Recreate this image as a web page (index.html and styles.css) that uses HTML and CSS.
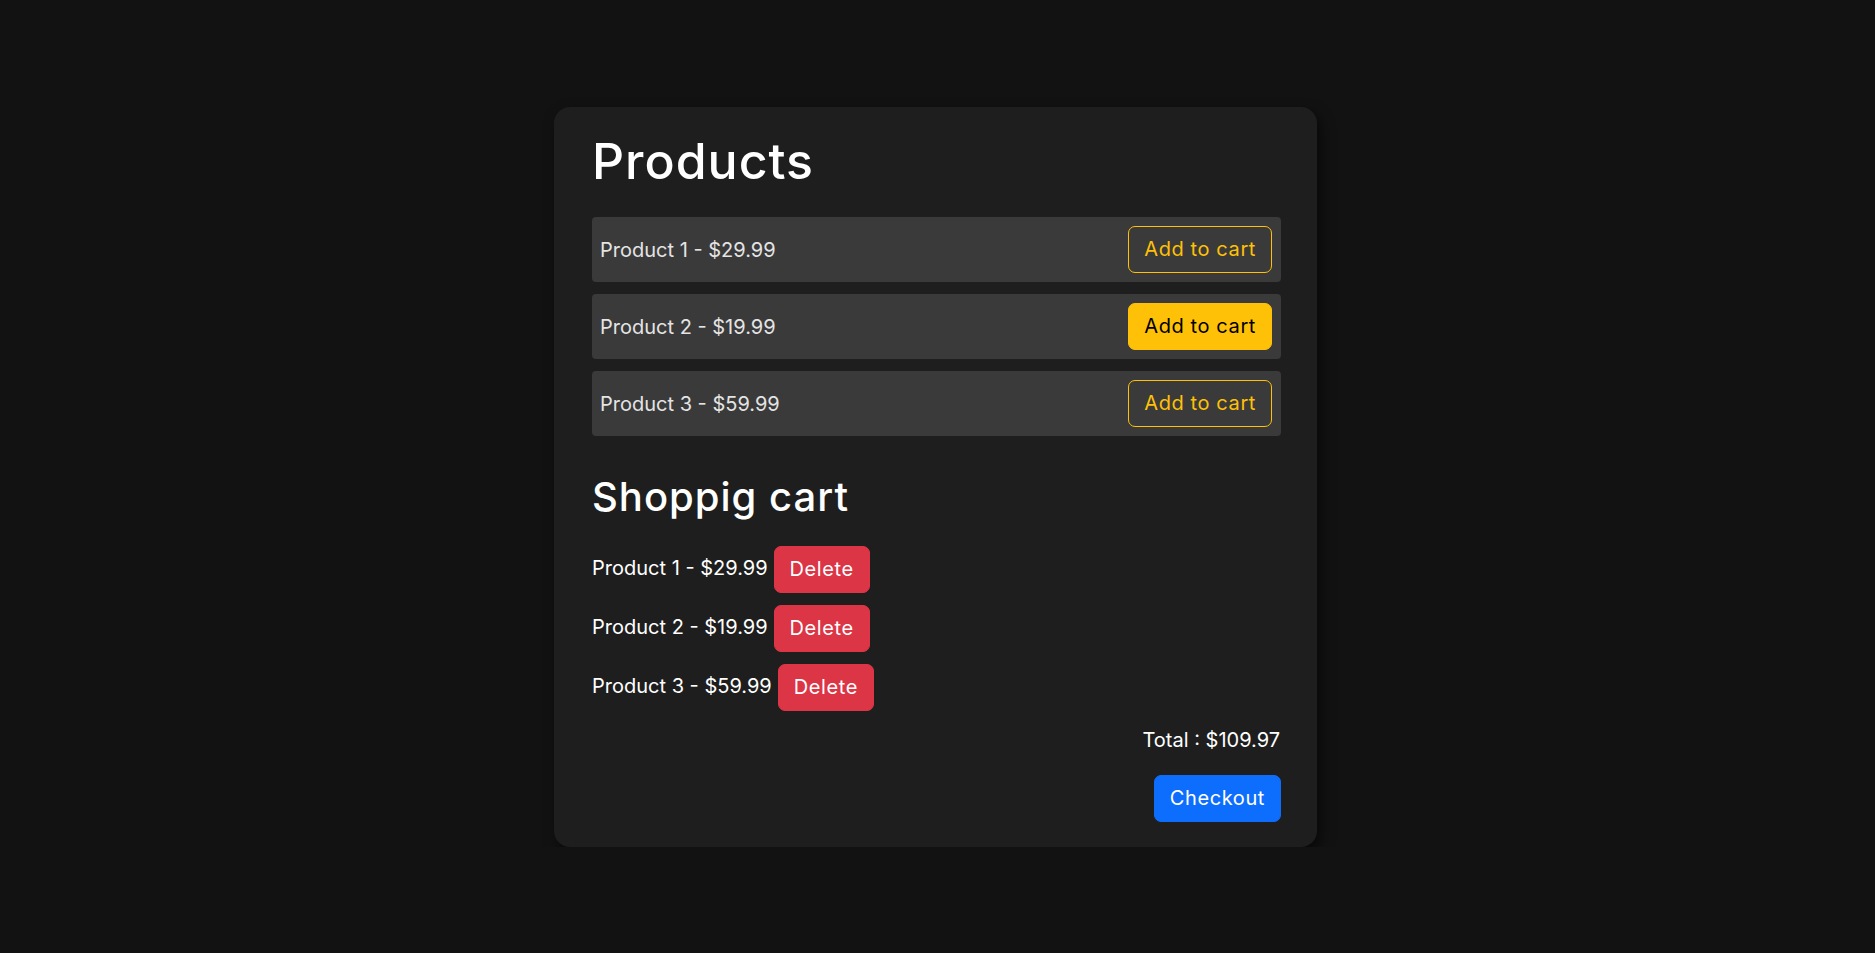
FILE: index.html
```html
<!DOCTYPE html>
<html lang="en">
<head>
<meta charset="utf-8">
<title>Shop</title>
<link rel="stylesheet" href="styles.css">
</head>
<body>
<div class="page">
  <div class="card">
    <h1 class="title">Products</h1>
    <div class="products">
      <div class="product-row">
        <span class="product-name">Product 1 - $29.99</span>
        <button class="btn btn-outline">Add to cart</button>
      </div>
      <div class="product-row">
        <span class="product-name">Product 2 - $19.99</span>
        <button class="btn btn-warning">Add to cart</button>
      </div>
      <div class="product-row">
        <span class="product-name">Product 3 - $59.99</span>
        <button class="btn btn-outline">Add to cart</button>
      </div>
    </div>
    <h2 class="subtitle">Shoppig cart</h2>
    <div class="cart">
      <div class="cart-item"><span class="cart-name">Product 1 - $29.99</span><button class="btn btn-danger">Delete</button></div>
      <div class="cart-item"><span class="cart-name">Product 2 - $19.99</span><button class="btn btn-danger">Delete</button></div>
      <div class="cart-item"><span class="cart-name">Product 3 - $59.99</span><button class="btn btn-danger">Delete</button></div>
    </div>
    <div class="total">Total : $109.97</div>
    <div class="actions"><button class="btn btn-primary">Checkout</button></div>
  </div>
</div>
</body>
</html>
```

FILE: styles.css
```css
* { box-sizing: border-box; }
html, body { margin: 0; padding: 0; }
body {
  background: #121212;
  color: #ffffff;
  font-family: "Inter", "Liberation Sans", sans-serif;
  font-size: 20px;
  line-height: 30px;
}
.page {
  display: flex;
  justify-content: center;
  padding: 107px 4px 0 0;
}
.card {
  width: 763px;
  background: #1e1e1e;
  border-radius: 16px;
  padding: 24px 36px 25px 38px;
  box-shadow: 4px 6px 14px rgba(0, 0, 0, 0.55);
}
.title {
  margin: 0 0 26px;
  font-size: 50px;
  line-height: 60px;
  font-weight: 500;
  letter-spacing: 1px;
}
.products {
  display: flex;
  flex-direction: column;
  gap: 12px;
}
.product-row {
  display: flex;
  justify-content: space-between;
  align-items: center;
  background: #3a3a3a;
  border-radius: 4px;
  padding: 9px 9px 9px 8px;
}
.product-name {
  color: #e4e4e4;
}
.btn {
  font-family: inherit;
  font-size: 20px;
  height: 47px;
  line-height: 45px;
  padding: 0 15px;
  border: 1px solid transparent;
  border-radius: 7px;
  letter-spacing: 0.6px;
  cursor: pointer;
}
.btn-outline {
  background: transparent;
  border-color: #ffc107;
  color: #ffc107;
}
.btn-warning {
  background: #ffc107;
  border-color: #ffc107;
  color: #000000;
}
.btn-danger {
  background: #dc3545;
  border-color: #dc3545;
  color: #ffffff;
}
.btn-primary {
  background: #0d6efd;
  border-color: #0d6efd;
  color: #ffffff;
}
.subtitle {
  margin: 37px 0 25px;
  font-size: 40px;
  line-height: 48px;
  font-weight: 500;
  letter-spacing: 1px;
}
.cart {
  display: flex;
  flex-direction: column;
  gap: 12px;
}
.cart-item {
  display: flex;
  align-items: center;
  gap: 6px;
}
.cart-name {
  padding-bottom: 3px;
}
.total {
  margin-top: 14px;
  text-align: right;
  padding-right: 1px;
}
.actions {
  display: flex;
  justify-content: flex-end;
  margin-top: 20px;
}
```
